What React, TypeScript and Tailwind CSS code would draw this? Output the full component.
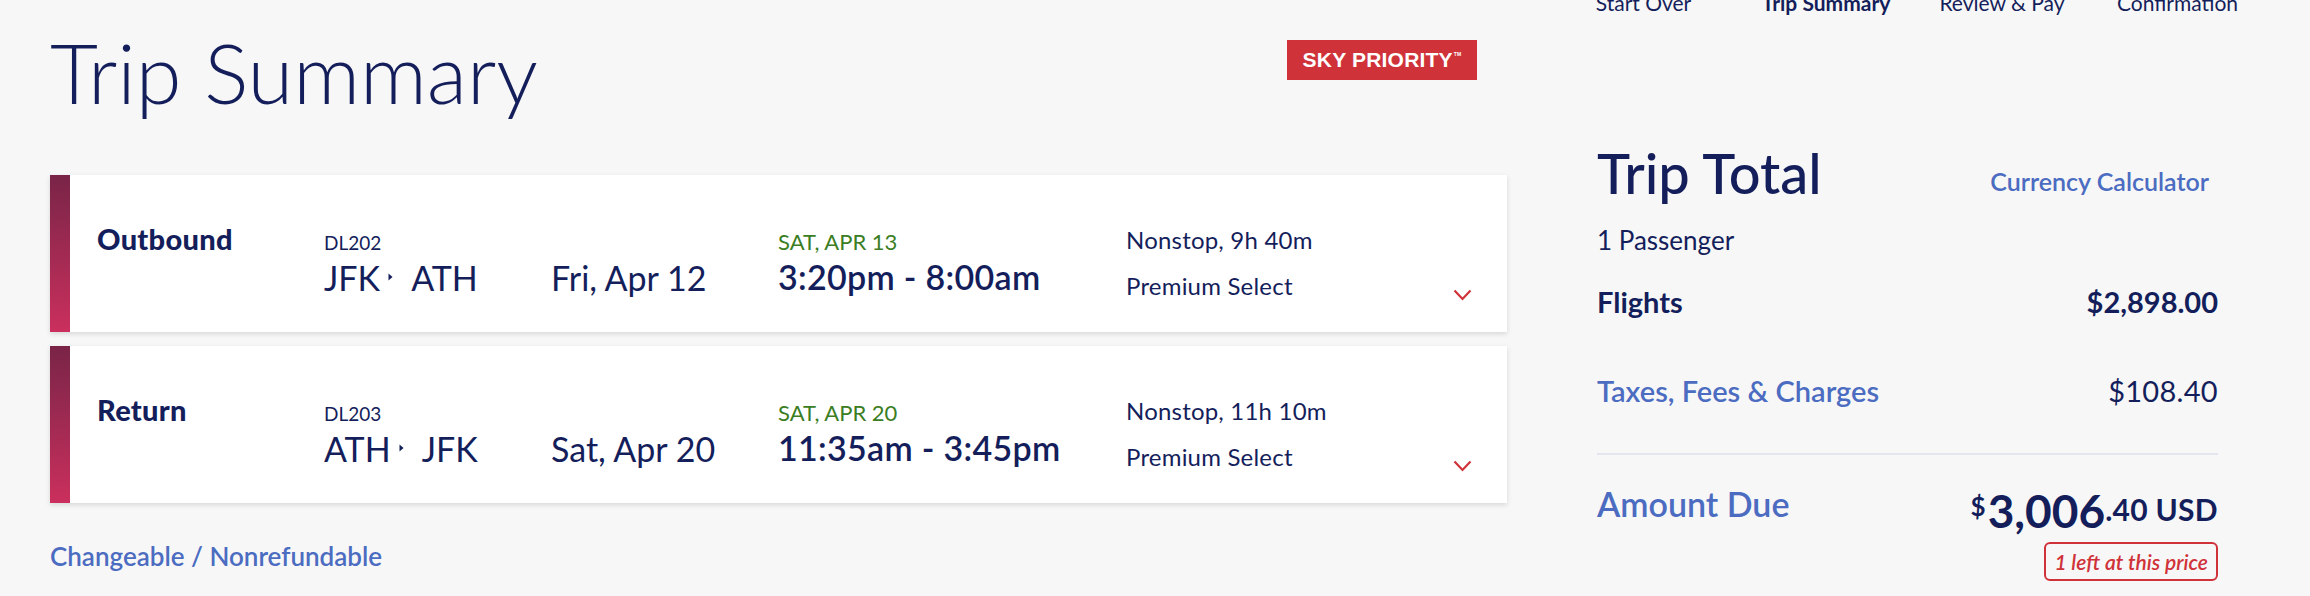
import * as React from "react";

const flights = [
  {
    label: "Outbound",
    code: "DL202",
    from: "JFK",
    to: "ATH",
    date: "Fri, Apr 12",
    arrive: "SAT, APR 13",
    time: "3:20pm - 8:00am",
    stops: "Nonstop, 9h 40m",
    cabin: "Premium Select",
  },
  {
    label: "Return",
    code: "DL203",
    from: "ATH",
    to: "JFK",
    date: "Sat, Apr 20",
    arrive: "SAT, APR 20",
    time: "11:35am - 3:45pm",
    stops: "Nonstop, 11h 10m",
    cabin: "Premium Select",
  },
];

function Caret() {
  return (
    <svg width="5" height="8" viewBox="0 0 5 8" className="mx-[8px] mb-[2px] shrink-0">
      <path d="M0.5 0.5 L4.5 4 L0.5 7.5 Z" fill="#141e5b" />
    </svg>
  );
}

function Chevron() {
  return (
    <svg width="19" height="12" viewBox="0 0 19 12">
      <polyline points="1.5,1.5 9.5,10 17.5,1.5" fill="none" stroke="#d0323a" strokeWidth="2.2" />
    </svg>
  );
}

function FlightCard({ f }: { f: (typeof flights)[number] }) {
  return (
    <div className="flex h-[157px] bg-white shadow-[0_2px_5px_rgba(0,0,0,0.13)]">
      <div className="w-[20px] shrink-0 bg-gradient-to-b from-[#792447] to-[#cb2f5d]" />
      <div className="w-[254px] shrink-0 pl-[27px] pt-[49px] text-[29px] leading-[29px] font-black tracking-[0.3px]">
        {f.label}
      </div>
      <div className="w-[454px] shrink-0 pt-[58px]">
        <div className="text-[19px] leading-[19px]">{f.code}</div>
        <div className="mt-[9px] flex text-[34px] leading-[34px]">
          <div className="flex w-[227px] items-center">
            <span>{f.from}</span>
            <Caret />
            <span className="ml-[10px]">{f.to}</span>
          </div>
          <span>{f.date}</span>
        </div>
      </div>
      <div className="w-[348px] shrink-0 pt-[56px]">
        <div className="text-[22px] leading-[22px] text-[#3b7d23]">{f.arrive}</div>
        <div className="mt-[7px] text-[34px] leading-[34px] font-semibold tracking-[0.3px]">{f.time}</div>
      </div>
      <div className="flex-1 pt-[53px] tracking-[0.2px]">
        <div className="text-[24px] leading-[24px]">{f.stops}</div>
        <div className="mt-[22px] text-[24px] leading-[24px]">{f.cabin}</div>
      </div>
      <div className="pt-[114px] pr-[35px]">
        <Chevron />
      </div>
    </div>
  );
}

export default function App() {
  return (
    <div className="min-h-[596px] overflow-hidden bg-[#f7f7f7] font-[Lato,sans-serif] text-[#141e5b]">
      {/* stepper, mostly scrolled off the top */}
      <nav className="-mt-[8px] flex h-[21px] justify-end pr-[39px] text-[21px] leading-[21px]">
        <span className="w-[177px] text-center">Start Over</span>
        <span className="w-[188px] text-center font-bold">Trip Summary</span>
        <span className="w-[164px] text-center">Review &amp; Pay</span>
        <span className="w-[187px] text-center">Confirmation</span>
      </nav>

      <div className="flex pl-[50px]">
        <main className="w-[1457px] shrink-0">
          <div className="flex items-start justify-between pt-[18px]">
            <h1 className="text-[83px] leading-[82px] font-light">Trip Summary</h1>
            <div className="mt-[9px] mr-[30px] flex h-[40px] w-[190px] items-center justify-center bg-[#d0323a] font-['Liberation_Sans',Arial,sans-serif] text-[21px] font-bold tracking-[0.2px] text-white">
              SKY PRIORITY<sup className="ml-[1px] -mt-[8px] text-[5px]">TM</sup>
            </div>
          </div>

          <div className="mt-[62px] flex flex-col gap-[14px]">
            {flights.map((f) => (
              <FlightCard key={f.code} f={f} />
            ))}
          </div>

          <div className="mt-[40px] text-[26px] leading-[26px] font-semibold text-[#4b6cc1]">
            Changeable / Nonrefundable
          </div>
        </main>

        <aside className="ml-[90px] w-[621px] shrink-0 pt-[132px]">
          <div className="flex items-start justify-between">
            <h2 className="text-[56px] leading-[56px] font-medium">Trip Total</h2>
            <a className="mt-[24px] pr-[9px] text-[25px] leading-[25px] font-semibold text-[#4b6cc1]">
              Currency Calculator
            </a>
          </div>
          <div className="mt-[26px] text-[26px] leading-[26px]">1 Passenger</div>

          <div className="mt-[34px] flex justify-between text-[29px] leading-[29px] font-bold">
            <span>Flights</span>
            <span>$2,898.00</span>
          </div>
          <div className="mt-[60px] flex justify-between text-[29px] leading-[29px]">
            <span className="font-semibold text-[#4b6cc1]">Taxes, Fees &amp; Charges</span>
            <span className="tracking-[0.3px]">$108.40</span>
          </div>

          <div className="mt-[48px] h-[2px] bg-[#e3e7ed]" />

          <div className="mt-[32px] flex items-start justify-between">
            <span className="text-[34px] leading-[34px] font-semibold text-[#4b6cc1]">Amount Due</span>
            <div className="flex items-start font-bold">
              <span className="mt-[6px] mr-[2px] text-[26px] leading-[26px]">$</span>
              <span className="mt-[1px] text-[46px] leading-[46px]">3,006</span>
              <span className="mt-[7px] text-[30px] leading-[30px] tracking-[0.3px]">.40 USD</span>
            </div>
          </div>

          <div className="mt-[8px] flex justify-end">
            <div className="flex h-[39px] items-center rounded-[6px] border-2 border-[#d0323a] px-[8px] text-[21px] font-semibold italic text-[#d0323a]">
              1 left at this price
            </div>
          </div>
        </aside>
      </div>
    </div>
  );
}
